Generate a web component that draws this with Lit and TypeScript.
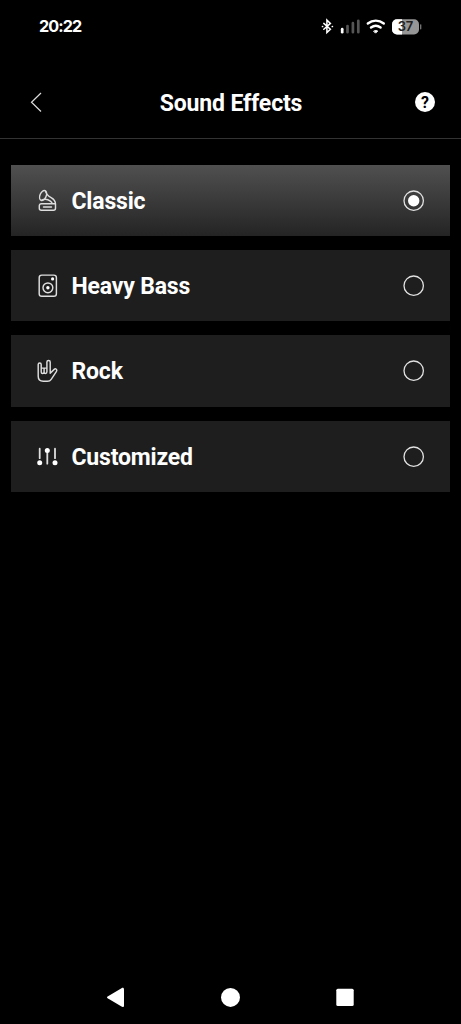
import { LitElement, html, css, svg } from "lit";
import { customElement, property, state } from "lit/decorators.js";

const icons: Record<string, unknown> = {
  classic: svg`<ellipse cx="7.1" cy="6.5" rx="3.1" ry="5.3" transform="rotate(22 7.1 6.5)"/>
    <path d="M9.5 2.2c.6 3.2 2.6 4.9 5.6 6.5 2.800 1.500 4.300 3.400 4.400 6.300v4.300a2 2 0 0 1-2 2H5.300a2 2 0 0 1-2-2v-2.600a2 2 0 0 1 2-2h14M5.400 11.300c3.100-1.600 6.600-.9 9 .8 1.200.8 1.700 1.700 1.800 2.600M7.500 18h8"/>`,
  bass: svg`<rect x="3.2" y="1.100" width="17.200" height="21.200" rx="2.600"/>
    <circle cx="11.900" cy="13.800" r="4.900"/>
    <circle class="fill" cx="11.900" cy="13.800" r="1.700"/><circle class="fill" cx="16.600" cy="4.900" r="1.600"/>`,
  rock: svg`<path d="M5.200 13V5.500a1.500 1.500 0 0 0-3 0v11.700c0 3.200 1.900 5 5.100 5h4.200c1.700 0 2.800-.6 3.700-1.900l5.300-8c1.100-1.700-.9-3.200-2.300-1.900l-4 3.800V3.100a1.650 1.650 0 0 0-3.300 0V12.800c0 1.200-.5 1.700-1.400 1.700s-1.400-.5-1.400-1.500V9.500M5.200 13c0 1 .5 1.500 1.400 1.500S8.100 14 8.100 13V9.300M5.200 9.100h5.700"/>`,
  custom: svg`<path class="bars" d="M3.700 3.700v9.500M11.300 8v10.700M19 3.700v9.500"/>
    <circle class="fill" cx="3.700" cy="17.700" r="2.500"/><circle class="fill" cx="11.300" cy="5.600" r="2.500"/><circle class="fill" cx="19" cy="17.700" r="2.500"/>`,
};

@customElement("status-bar")
class StatusBar extends LitElement {
  static styles = css`
    :host { display: flex; height: 53px; padding: 0 39px; align-items: center; justify-content: space-between;
      box-sizing: border-box; color: #fff; }
    .time { font: 700 16.200px/20px Inter, sans-serif; letter-spacing: -0.900px; padding-bottom: 2px; }
    svg { display: block; width: 102px; height: 20px; }
    .pct { font: 600 13px Inter, sans-serif; letter-spacing: -0.3px; }
  `;
  render() {
    return html`<span class="time">20:22</span>
      <svg viewBox="320 17 102 20" fill="none" stroke-linecap="round">
        <path d="M323.800 23.400l6.600 5.900-3.500 3.300V20.100l3.500 3.300-6.600 5.900" stroke="#fff" stroke-width="1.500"/>
        <path d="M322.500 26.500h.1M332.300 26.500h.1" stroke="#fff" stroke-width="1.700"/>
        <path d="M342.200 29.200v3" stroke="#fff" stroke-width="2.700"/>
        <path d="M347.500 26v6.200M352.900 23.200v9M358.300 20.800v11.400" stroke="#555" stroke-width="2.700"/>
        <path d="M367.800 23.500c4.800-3.900 11.200-3.900 16 0M371 27.500c3-2.300 6.600-2.300 9.600 0" stroke="#fff" stroke-width="2.400"/>
        <path d="M373.900 31c1.200-.8 2.700-.8 3.800 0l-1.900 1.900z" fill="#fff" stroke="#fff" stroke-width="1"/>
        <rect x="392" y="19.200" width="27" height="15.200" rx="5" fill="#969696"/>
        <path d="M397 19.200h5v15.200h-5a5 5 0 0 1-5-5v-5.200a5 5 0 0 1 5-5z" fill="#fff"/>
        <path d="M420.700 24.800v4" stroke="#777" stroke-width="1.300"/>
        <text class="pct" x="405.300" y="31.400" text-anchor="middle" fill="#222">37</text>
      </svg>`;
  }
}

@customElement("effect-option")
class EffectOption extends LitElement {
  @property() label = "";
  @property() icon = "";
  @property({ type: Boolean }) selected = false;
  static styles = css`
    :host { display: block; }
    .card { display: flex; align-items: center; height: 71.4px; box-sizing: border-box; padding: 0 25px;
      background: #1e1e1e; color: #fff; }
    .selected { background: linear-gradient(#505050, #242424); }
    .icon { width: 24px; height: 24px; margin: 1px 0 0 -0.500px; fill: none; stroke: #dedede; stroke-width: 1.450;
      stroke-linecap: round; stroke-linejoin: round; }
    .bars { stroke-width: 1.800; }
    .fill { fill: #fff; stroke: none; }
    .label { flex: 1; margin-left: 12px; padding-top: 3px; font: 700 23px/28px Roboto, sans-serif; letter-spacing: -0.180px; }
    .radio { width: 22px; height: 22px; margin-top: 1px; }
  `;
  render() {
    return html`<div class="card ${this.selected ? "selected" : ""}">
      <svg class="icon" viewBox="0 0 24 24">${icons[this.icon]}</svg>
      <span class="label">${this.label}</span>
      <svg class="radio" viewBox="0 0 22 22">
        <circle cx="10.700" cy="10.700" r="9.700" fill="none" stroke="#e2e2e2" stroke-width="1.300"/>
        ${this.selected ? svg`<circle cx="10.700" cy="10.700" r="5.700" fill="#fff"/>` : ""}
      </svg>
    </div>`;
  }
}

@customElement("app-root")
class AppRoot extends LitElement {
  @state() private current = "classic";
  private options = [
    { id: "classic", label: "Classic" },
    { id: "bass", label: "Heavy Bass" },
    { id: "rock", label: "Rock" },
    { id: "custom", label: "Customized" },
  ];
  static styles = css`
    :host { display: flex; flex-direction: column; height: 1024px; background: #000; overflow: hidden; }
    .header { display: grid; grid-template-columns: 50px 1fr 50px; align-items: center; height: 86px;
      box-sizing: border-box; padding: 13px 0 0; border-bottom: 1px solid #333; }
    .back { width: 14px; height: 22px; margin-left: 30px; }
    .title { margin: 0; padding: 3px 0 0 1px; text-align: center; color: #fff; font: 700 23px/28px Roboto, sans-serif;
      letter-spacing: -0.150px; }
    .help { width: 22px; height: 22px; margin-left: 3px; }
    .q { font: 700 16px Roboto, sans-serif; }
    .list { display: flex; flex-direction: column; gap: 13.900px; padding: 25.700px 11px 0; flex: 1; }
    .nav { display: flex; justify-content: center; height: 54px; }
    .nav svg { width: 250px; height: 54px; }
  `;
  render() {
    return html`<status-bar></status-bar>
      <header class="header">
        <svg class="back" viewBox="0 0 14 22"><path d="M11 2L1.500 11.300 11 20.500" fill="none" stroke="#ddd" stroke-width="1.200"/></svg>
        <h1 class="title">Sound Effects</h1>
        <svg class="help" viewBox="0 0 22 22"><circle cx="11" cy="11" r="10" fill="#fff"/>
          <text class="q" x="11" y="16.700" text-anchor="middle" fill="#000">?</text></svg>
      </header>
      <main class="list">
        ${this.options.map((o) => html`<effect-option .label=${o.label} .icon=${o.id}
          ?selected=${o.id === this.current} @click=${() => (this.current = o.id)}></effect-option>`)}
      </main>
      <nav class="nav"><svg viewBox="106 970 250 54" fill="#fff">
        <path d="M108 996.200l13.500-8c1.400-.8 2.500-.3 2.500 1.200v16c0 1.500-1.100 2-2.500 1.200l-13.500-8c-1.300-.8-1.300-1.600 0-2.400z"/>
        <circle cx="230.500" cy="997.400" r="9.500"/>
        <rect x="336.300" y="988.700" width="17.400" height="17.400" rx="1.500"/>
      </svg></nav>`;
  }
}
